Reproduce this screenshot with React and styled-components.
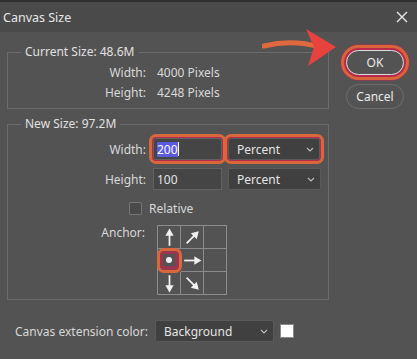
import React from "react";
import styled, { createGlobalStyle, css } from "styled-components";

const GlobalStyle = createGlobalStyle`
  html, body {
    margin: 0;
    padding: 0;
    background: #535353;
  }
  body {
    font-family: "Noto Sans", "Open Sans", sans-serif;
    font-size: 12px;
    color: #d8d8d8;
  }
`;

// red/orange annotation ring drawn over a control
const highlight = css`
  border-radius: 3px;
  outline: 3px solid #d8683b;
  outline-offset: 1px;
  box-shadow: 0 0 0 1px #b8294f;
`;

const CloseIcon = () => (
  <svg width="12" height="12" viewBox="0 0 12 12">
    <path d="M1 1 L11 11 M11 1 L1 11" stroke="#e8e8e8" strokeWidth="1.4" />
  </svg>
);

const Chevron = () => (
  <svg width="8" height="5" viewBox="0 0 8 5">
    <path d="M1 1 L4 4 L7 1" stroke="#bdbdbd" strokeWidth="1.1" fill="none" />
  </svg>
);

const Arrow = ({ d }) => (
  <svg width="19" height="19" viewBox="0 0 16 16">
    <g transform={`rotate(${d} 8 8)`}>
      <path d="M8 15 L8 5" stroke="#f0f0f0" strokeWidth="1.5" />
      <path d="M8 0.5 L4.5 6.5 L11.5 6.5 Z" fill="#f0f0f0" />
    </g>
  </svg>
);

const anchorCells = [
  { r: 0 }, { r: 45 }, null,
  "dot", { r: 90 }, null,
  { r: 180 }, { r: 135 }, null
];

const App = () => {
  return (
    <Dialog>
      <GlobalStyle />
      <TitleBar>
        <Title>Canvas Size</Title>
        <CloseIcon />
      </TitleBar>
      <Body>
        <Main>
          <Group $top={2} $bottom={6}>
            <Legend>Current Size: 48.6M</Legend>
            <InfoRow>
              <Label>Width:</Label>
              <Value>4000 Pixels</Value>
            </InfoRow>
            <InfoRow>
              <Label>Height:</Label>
              <Value>4248 Pixels</Value>
            </InfoRow>
          </Group>
          <Group $top={6} $bottom={4}>
            <Legend>New Size: 97.2M</Legend>
            <FormRow>
              <Label>Width:</Label>
              <Input $marked>
                <Selected>200</Selected>
                <Caret />
              </Input>
              <Select $marked $width={92}>
                Percent
                <Chevron />
              </Select>
            </FormRow>
            <FormRow>
              <Label>Height:</Label>
              <Input>100</Input>
              <Select $width={93}>
                Percent
                <Chevron />
              </Select>
            </FormRow>
            <CheckRow>
              <Checkbox />
              <span>Relative</span>
            </CheckRow>
            <AnchorRow>
              <Label>Anchor:</Label>
              <AnchorGrid>
                {anchorCells.map((c, i) => (
                  <Cell key={i} $marked={c === "dot"}>
                    {c === "dot" ? <Dot /> : c ? <Arrow d={c.r} /> : null}
                  </Cell>
                ))}
              </AnchorGrid>
            </AnchorRow>
          </Group>
          <ExtensionRow>
            <span>Canvas extension color:</span>
            <Select $width={119}>
              Background
              <Chevron />
            </Select>
            <Swatch />
          </ExtensionRow>
        </Main>
        <Side>
          <Button $primary>OK</Button>
          <Button>Cancel</Button>
        </Side>
      </Body>
      <Pointer width="80" height="44" viewBox="0 0 80 44">
        <path d="M2 20 Q30 13 58 21" stroke="#e0683c" strokeWidth="5" fill="none" strokeLinecap="round" />
        <path d="M44 3 L74 21 L46 40 L52 21 Z" fill="#e8423f" />
      </Pointer>
    </Dialog>
  );
};

export default App;

const Dialog = styled.div`
  position: relative;
  width: 417px;
  height: 359px;
  background: #535353;
  border-top: 2px solid #2f2f2f;
  box-sizing: border-box;
  overflow: hidden;
`;

const TitleBar = styled.div`
  height: 30px;
  background: #4a4a4a;
  display: flex;
  align-items: center;
  justify-content: space-between;
  padding: 0 9px 0 3px;
`;

const Title = styled.span`
  font-size: 12.5px;
  color: #e6e6e6;
`;

const Body = styled.div`
  display: flex;
  padding: 12px 0 0 7px;
`;

const Main = styled.div`
  width: 322px;
  display: flex;
  flex-direction: column;
  gap: 7px;
`;

const Group = styled.fieldset`
  margin: 0;
  border: 1px solid #6c6c6c;
  padding: ${p => p.$top}px 0 ${p => p.$bottom}px 0;
  display: flex;
  flex-direction: column;
  min-width: 0;
`;

const Legend = styled.legend`
  margin-left: 13px;
  padding: 0 4px;
  line-height: 16px;
  color: #e0e0e0;
`;

const InfoRow = styled.div`
  display: flex;
  align-items: center;
  height: 20px;
`;

const Label = styled.span`
  width: 138px;
  text-align: right;
  flex-shrink: 0;
`;

const Value = styled.span`
  margin-left: 11px;
`;

const FormRow = styled.div`
  display: flex;
  align-items: center;
  gap: 6px;
  height: 22px;
  margin-bottom: 8px;
  & > ${Label} {
    margin-right: 1px;
  }
`;

const Input = styled.div`
  width: 69px;
  height: 22px;
  box-sizing: border-box;
  background: #454545;
  border: 1px solid #626262;
  padding: 0 3px;
  display: flex;
  align-items: center;
  color: #e4e4e4;
  ${p => p.$marked && highlight}
`;

const Selected = styled.span`
  background: #5b5be0;
  color: #ffffff;
  line-height: 15px;
`;

const Caret = styled.span`
  width: 1px;
  height: 14px;
  background: #ffffff;
`;

const Select = styled.div`
  width: ${p => p.$width}px;
  height: 22px;
  box-sizing: border-box;
  background: #404040;
  border: 1px solid #5a5a5a;
  border-radius: 2px;
  padding: 0 5px 0 8px;
  display: flex;
  align-items: center;
  justify-content: space-between;
  color: #e4e4e4;
  ${p => p.$marked && highlight}
`;

const CheckRow = styled.div`
  display: flex;
  align-items: center;
  gap: 7px;
  height: 20px;
  padding-left: 121px;
  margin-bottom: 7px;
`;

const Checkbox = styled.span`
  width: 11px;
  height: 11px;
  border: 1px solid #757575;
  background: #4a4a4a;
  border-radius: 1px;
`;

const AnchorRow = styled.div`
  display: flex;
  align-items: flex-start;
  & > ${Label} {
    line-height: 16px;
    width: 137px;
  }
`;

const AnchorGrid = styled.div`
  margin-left: 12px;
  display: grid;
  grid-template-columns: repeat(3, 23px);
  grid-template-rows: repeat(3, 23px);
  border-left: 1px solid #8c8c8c;
  border-top: 1px solid #8c8c8c;
`;

const Cell = styled.div`
  border-right: 1px solid #8c8c8c;
  border-bottom: 1px solid #8c8c8c;
  display: flex;
  align-items: center;
  justify-content: center;
  ${p => p.$marked && css`
    border-radius: 6px;
    outline: 3px solid #d8683b;
    outline-offset: -2px;
    box-shadow: inset 0 0 0 5px rgba(184, 41, 79, 0.7);
  `}
`;

const Dot = styled.span`
  width: 6px;
  height: 6px;
  border-radius: 50%;
  background: #f0f0f0;
`;

const ExtensionRow = styled.div`
  display: flex;
  align-items: center;
  gap: 6px;
  margin-top: 13px;
  padding-left: 8px;
  & > ${Select} {
    margin-left: 1px;
  }
`;

const Swatch = styled.span`
  width: 14px;
  height: 14px;
  background: #ffffff;
  border: 1px solid #8a8a8a;
  box-sizing: border-box;
`;

const Side = styled.div`
  margin-left: 17px;
  padding-top: 6px;
  display: flex;
  flex-direction: column;
  gap: 9px;
`;

const Button = styled.div`
  width: 58px;
  height: 25px;
  box-sizing: border-box;
  border-radius: 13px;
  border: 1.5px solid ${p => (p.$primary ? "#dcdcdc" : "#6e6e6e")};
  display: flex;
  align-items: center;
  justify-content: center;
  color: #eaeaea;
  ${p => p.$primary && css`
    box-shadow: 0 0 0 2px #b8294f, 0 0 0 5px #d8643a, 0 0 0 6px rgba(184, 41, 79, 0.5);
  `}
`;

const Pointer = styled.svg`
  position: absolute;
  left: 262px;
  top: 24px;
`;
